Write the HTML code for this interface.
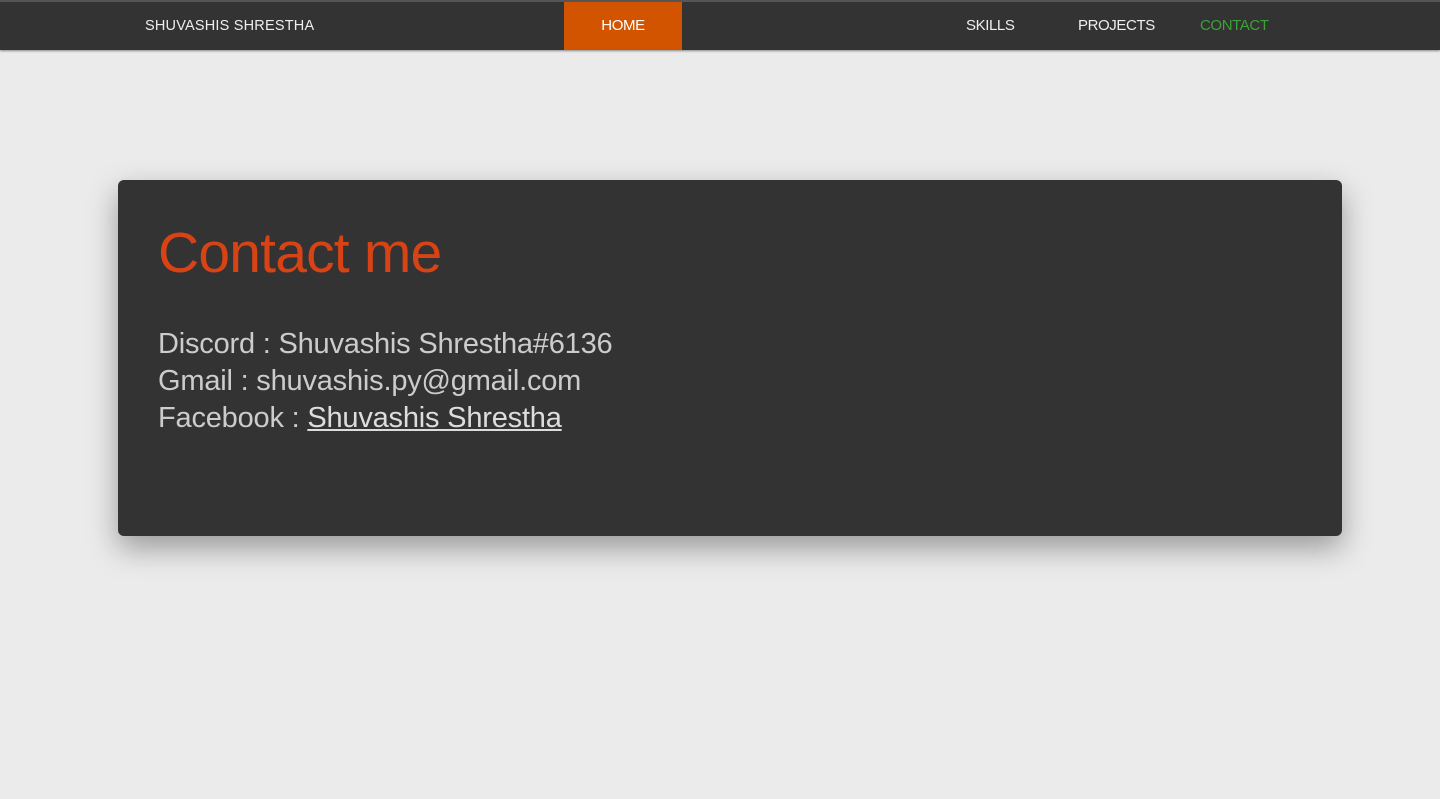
<!DOCTYPE html>
<html><head><style>
body{margin:0;background:#ebebeb;font-family:"Liberation Sans",sans-serif;width:1440px;height:799px;overflow:hidden;position:relative}
.nav{position:absolute;left:0;top:0;width:1440px;height:50px;background:#333;border-top:2px solid #555;box-sizing:border-box;box-shadow:0 1px 2px #888}
.nav span{position:absolute;top:0;line-height:48px;font-size:15px;color:#eee;letter-spacing:-0.4px}
.home{left:564px;width:118px;text-align:center;background:#d35400;color:#fff!important}
.card{position:absolute;left:118px;top:180px;width:1224px;height:356px;background:#333;border-radius:6px;box-shadow:0 12px 30px rgba(0,0,0,.35)}
h1{position:absolute;left:40px;top:40px;margin:0;font-weight:300;font-size:57px;color:#d84315;letter-spacing:-0.8px}
.t{position:absolute;left:40px;top:146px;font-size:29px;line-height:37px;color:#ccc;letter-spacing:-0.2px;font-weight:300}
a{color:#ddd;text-decoration:underline}
</style></head><body>
<div class="nav">
<span style="left:145px;font-size:14.5px;letter-spacing:0.2px">SHUVASHIS SHRESTHA</span>
<span class="home">HOME</span>
<span style="left:966px">SKILLS</span>
<span style="left:1078px">PROJECTS</span>
<span style="left:1200px;color:#3aa335">CONTACT</span>
</div>
<div class="card">
<h1>Contact me</h1>
<div class="t">Discord : Shuvashis Shrestha#6136<br>Gmail : shuvashis.py@gmail.com<br>Facebook : <a>Shuvashis Shrestha</a></div>
</div>
</body></html>
